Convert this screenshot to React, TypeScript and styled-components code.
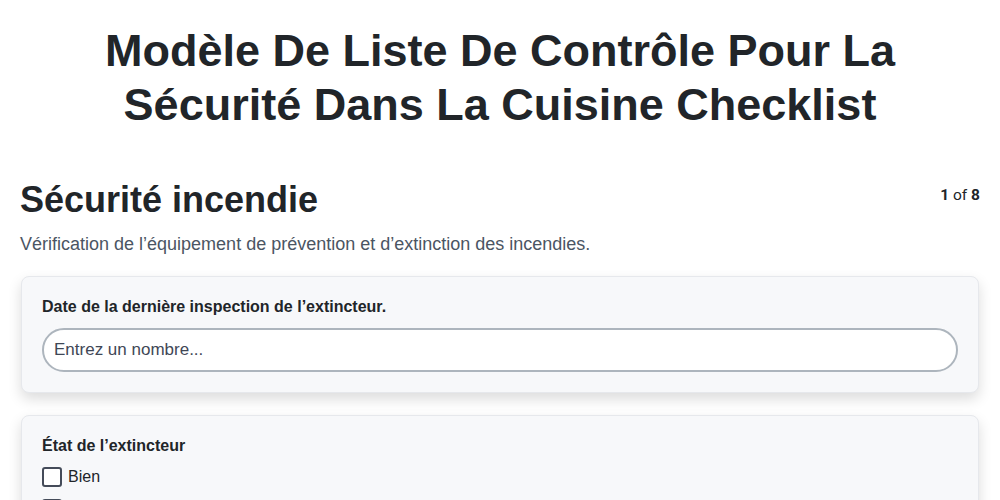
import styled, { createGlobalStyle } from 'styled-components';

const GlobalStyle = createGlobalStyle`
  body {
    margin: 0;
    background: #ffffff;
    font-family: "Liberation Sans", Arial, sans-serif;
    color: #212529;
  }
`;

const Page = styled.div`
  padding: 24px 20px 40px;
`;

const Title = styled.h1`
  margin: 0 auto 46px;
  max-width: 820px;
  text-align: center;
  font-size: 45px;
  line-height: 54px;
  font-weight: 700;
  color: #212529;
`;

const SectionHead = styled.div`
  display: flex;
  justify-content: space-between;
  align-items: flex-start;
`;

const SectionTitle = styled.h2`
  margin: 0;
  font-size: 36px;
  line-height: 44px;
  font-weight: 700;
  color: #212529;
`;

const Counter = styled.div`
  font-family: Roboto, "Liberation Sans", sans-serif;
  font-size: 15.5px;
  padding-top: 8px;
  color: #212529;
  b { font-weight: 700; }
`;

const Description = styled.p`
  margin: 11px 0 21px;
  font-size: 18px;
  line-height: 22px;
  color: #4b5563;
`;

const Card = styled.div`
  background: #f7f8fa;
  border: 1px solid #e6e8ec;
  border-radius: 8px;
  box-shadow: 0 6px 14px rgba(0, 0, 0, 0.14);
  padding: 21px 20px 20px;
  margin: 0 1px 22px;
`;

const Label = styled.div`
  font-size: 16px;
  font-weight: 700;
  color: #212529;
  margin-bottom: 12px;
`;

const TextInput = styled.input`
  box-sizing: border-box;
  width: 100%;
  height: 44px;
  border: 2px solid #adb5bd;
  border-radius: 22px;
  background: #ffffff;
  padding: 0 10px;
  font-family: "Liberation Sans", Arial, sans-serif;
  font-size: 17px;
  outline: none;
  &::placeholder { color: #3f4756; }
`;

const Options = styled.div`
  display: flex;
  flex-direction: column;
  gap: 12px;
`;

const Option = styled.label`
  display: flex;
  align-items: center;
  gap: 6px;
  font-size: 16px;
  color: #212529;
`;

const Box = styled.span`
  box-sizing: border-box;
  width: 20px;
  height: 20px;
  border: 2px solid #444b59;
  border-radius: 3px;
  background: #ffffff;
`;

const options = ['Bien', 'Nécessite un entretien', 'Remplacement requis'];

export default function App() {
  return (
    <>
      <GlobalStyle />
      <Page>
        <Title>Modèle De Liste De Contrôle Pour La Sécurité Dans La Cuisine Checklist</Title>
        <SectionHead>
          <SectionTitle>Sécurité incendie</SectionTitle>
          <Counter><b>1</b> of <b>8</b></Counter>
        </SectionHead>
        <Description>Vérification de l’équipement de prévention et d’extinction des incendies.</Description>
        <Card>
          <Label>Date de la dernière inspection de l’extincteur.</Label>
          <TextInput placeholder="Entrez un nombre..." />
        </Card>
        <Card>
          <Label>État de l’extincteur</Label>
          <Options>
            {options.map(o => (
              <Option key={o}><Box />{o}</Option>
            ))}
          </Options>
        </Card>
      </Page>
    </>
  );
}
